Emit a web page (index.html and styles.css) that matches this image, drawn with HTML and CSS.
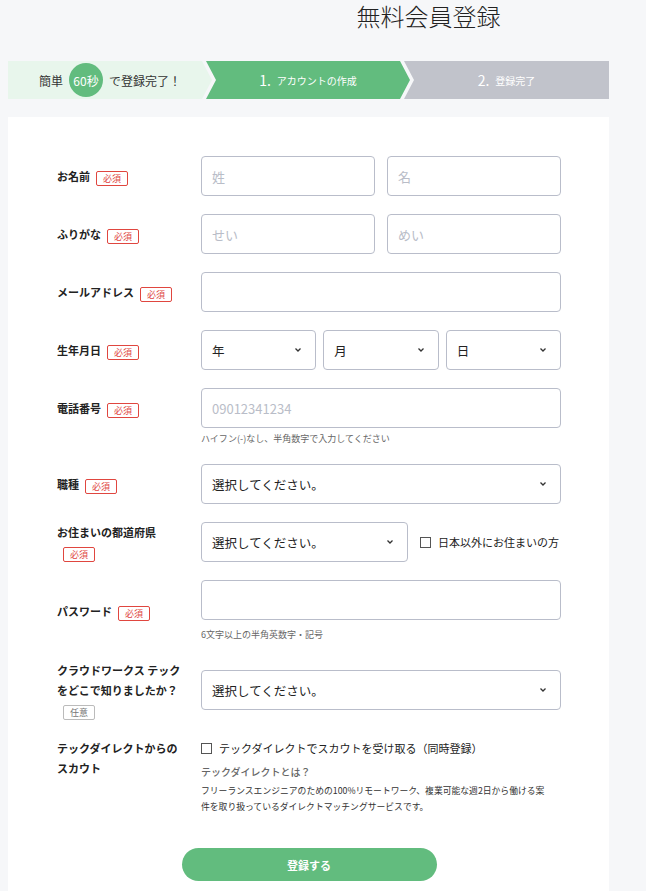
FILE: index.html
```html
<!DOCTYPE html>
<html lang="ja">
<head>
    <meta charset="UTF-8">
    <meta name="viewport" content="width=device-width, initial-scale=1.0">
    <title>無料会員登録</title>
    <link rel="stylesheet" href="styles.css">
</head>
<body>
<div class="page">
    <h1 class="title">無料会員登録</h1>

    <!-- Steps -->
    <div class="steps">
        <div class="step step-intro">
            <span>簡単</span>
            <span class="sec">60秒</span>
            <span>で登録完了！</span>
        </div>
        <div class="step step-current">
            <span class="num">1.</span><span>アカウントの作成</span>
        </div>
        <div class="step step-next">
            <span class="num">2.</span><span>登録完了</span>
        </div>
    </div>

    <!-- Form -->
    <form class="card">
        <div class="row">
            <div class="label">お名前<span class="badge">必須</span></div>
            <div class="field pair">
                <input type="text" placeholder="姓">
                <input type="text" placeholder="名">
            </div>
        </div>

        <div class="row">
            <div class="label">ふりがな<span class="badge">必須</span></div>
            <div class="field pair">
                <input type="text" placeholder="せい">
                <input type="text" placeholder="めい">
            </div>
        </div>

        <div class="row">
            <div class="label">メールアドレス<span class="badge">必須</span></div>
            <div class="field">
                <input type="email">
            </div>
        </div>

        <div class="row">
            <div class="label">生年月日<span class="badge">必須</span></div>
            <div class="field triple">
                <div class="select"><span>年</span><svg width="8" height="6" viewBox="0 0 8 6"><polyline points="1.5,1.5 4,4 6.5,1.5" /></svg></div>
                <div class="select"><span>月</span><svg width="8" height="6" viewBox="0 0 8 6"><polyline points="1.5,1.5 4,4 6.5,1.5" /></svg></div>
                <div class="select"><span>日</span><svg width="8" height="6" viewBox="0 0 8 6"><polyline points="1.5,1.5 4,4 6.5,1.5" /></svg></div>
            </div>
        </div>

        <div class="row row-top">
            <div class="label label-phone">電話番号<span class="badge">必須</span></div>
            <div class="field">
                <input type="tel" placeholder="09012341234">
                <p class="hint">ハイフン(-)なし、半角数字で入力してください</p>
            </div>
        </div>

        <div class="row">
            <div class="label">職種<span class="badge">必須</span></div>
            <div class="field">
                <div class="select"><span>選択してください。</span><svg width="8" height="6" viewBox="0 0 8 6"><polyline points="1.5,1.5 4,4 6.5,1.5" /></svg></div>
            </div>
        </div>

        <div class="row">
            <div class="label">お住まいの都道府県<span class="badge">必須</span></div>
            <div class="field pref">
                <div class="select"><span>選択してください。</span><svg width="8" height="6" viewBox="0 0 8 6"><polyline points="1.5,1.5 4,4 6.5,1.5" /></svg></div>
                <label class="check"><span class="box"></span>日本以外にお住まいの方</label>
            </div>
        </div>

        <div class="row">
            <div class="label">パスワード<span class="badge">必須</span></div>
            <div class="field">
                <input type="password">
                <p class="hint hint-pw">6文字以上の半角英数字・記号</p>
            </div>
        </div>

        <div class="row">
            <div class="label">クラウドワークス テック<br>をどこで知りましたか？<span class="badge badge-optional">任意</span></div>
            <div class="field">
                <div class="select"><span>選択してください。</span><svg width="8" height="6" viewBox="0 0 8 6"><polyline points="1.5,1.5 4,4 6.5,1.5" /></svg></div>
            </div>
        </div>

        <div class="row row-top">
            <div class="label">テックダイレクトからの<br>スカウト</div>
            <div class="field">
                <label class="check check-scout"><span class="box"></span>テックダイレクトでスカウトを受け取る（同時登録）</label>
                <p class="about-title">テックダイレクトとは？</p>
                <p class="about">フリーランスエンジニアのための100%リモートワーク、複業可能な週2日から働ける案件を取り扱っているダイレクトマッチングサービスです。</p>
            </div>
        </div>

        <div class="actions">
            <button type="button" class="submit">登録する</button>
        </div>
    </form>
</div>
</body>
</html>
```

FILE: styles.css
```css
/* Basic Reset */
body, h1, p, form, input, button {
    margin: 0;
    padding: 0;
    box-sizing: border-box;
}

body {
    font-family: "Noto Sans CJK JP", "Noto Sans", sans-serif;
    background-color: #f6f7f9;
    color: #222;
}

.page {
    width: 601px;
    margin-left: 8px;
}

.title {
    font-size: 24px;
    font-weight: 300;
    line-height: 32px;
    color: #222;
    text-align: center;
    padding-left: 240px;
    margin-bottom: 29px;
}

/* Steps */
.steps {
    display: flex;
    height: 38px;
}

.step {
    display: flex;
    align-items: center;
    justify-content: center;
    height: 38px;
    font-size: 10px;
    color: #fff;
}

.step-intro {
    width: 204px;
    background-color: #e8f6ec;
    color: #333;
    font-size: 12px;
    gap: 6px;
    clip-path: polygon(0 0, calc(100% - 10px) 0, 100% 50%, calc(100% - 10px) 100%, 0 100%);
}

.sec {
    width: 34px;
    height: 34px;
    border-radius: 50%;
    background-color: #62bc7e;
    color: #fff;
    display: flex;
    align-items: center;
    justify-content: center;
    font-size: 12px;
}

.step-current {
    width: 204px;
    margin-left: -6px;
    background-color: #62bc7e;
    clip-path: polygon(0 0, calc(100% - 10px) 0, 100% 50%, calc(100% - 10px) 100%, 0 100%, 10px 50%);
}

.step-next {
    flex: 1;
    margin-left: -6px;
    background-color: #c1c3cb;
    clip-path: polygon(0 0, 100% 0, 100% 100%, 0 100%, 10px 50%);
}

.num {
    font-size: 14px;
    margin-right: 6px;
}

/* Form card */
.card {
    background-color: #fff;
    margin-top: 18px;
    padding: 39px 48px 40px 49px;
}

.row {
    display: flex;
    align-items: center;
    margin-bottom: 18px;
}

.row-top {
    align-items: flex-start;
}

.label {
    width: 130px;
    margin-right: 14px;
    flex-shrink: 0;
    font-size: 11px;
    font-weight: bold;
    line-height: 20px;
    color: #222;
}

.label-phone {
    margin-top: 10px;
}

.badge {
    display: inline-block;
    margin-left: 6px;
    padding: 0 6px;
    height: 15px;
    line-height: 13px;
    font-size: 9px;
    font-weight: normal;
    color: #e0463f;
    border: 1px solid #e0463f;
    border-radius: 2px;
    vertical-align: middle;
    box-sizing: border-box;
}

.badge-optional {
    color: #777;
    border-color: #bbb;
}

.field {
    flex: 1;
}

input {
    display: block;
    width: 100%;
    height: 40px;
    padding: 0 10px;
    font-family: inherit;
    font-size: 13px;
    color: #222;
    border: 1px solid #b9bdca;
    border-radius: 4px;
    background-color: #fff;
    outline: none;
}

input::placeholder {
    color: #b9bdc8;
}

.pair {
    display: flex;
    gap: 12px;
}

.triple {
    display: flex;
    gap: 7px;
}

.triple .select {
    flex: 1;
}

.select {
    display: flex;
    align-items: center;
    justify-content: space-between;
    height: 40px;
    padding: 0 13px 0 10px;
    font-size: 12.5px;
    color: #222;
    border: 1px solid #b9bdca;
    border-radius: 4px;
    background-color: #fff;
    box-sizing: border-box;
}

.select svg polyline {
    fill: none;
    stroke: #333;
    stroke-width: 1.3;
}

.hint {
    margin-top: 4px;
    font-size: 9px;
    line-height: 14px;
    color: #666;
}

.hint-pw {
    margin-top: 8px;
}

.pref {
    display: flex;
    align-items: center;
}

.pref .select {
    width: 207px;
}

.check {
    display: flex;
    align-items: center;
    font-size: 11px;
    color: #222;
    line-height: 20px;
}

.pref .check {
    margin-left: 12px;
}

.box {
    width: 11px;
    height: 11px;
    border: 1px solid #555;
    box-sizing: border-box;
    margin-right: 7px;
    background-color: #fff;
}

.about-title {
    margin-top: 6px;
    font-size: 10px;
    font-weight: 500;
    line-height: 16px;
    color: #666;
}

.about {
    max-width: 348px;
    margin-top: 3px;
    font-size: 8.8px;
    line-height: 16px;
    color: #333;
}

/* Submit */
.actions {
    display: flex;
    justify-content: center;
    margin-top: 33px;
}

.submit {
    width: 255px;
    height: 33px;
    border: none;
    border-radius: 17px;
    background-color: #62bc7e;
    color: #fff;
    font-family: inherit;
    font-size: 11px;
    font-weight: bold;
    cursor: pointer;
}
```
